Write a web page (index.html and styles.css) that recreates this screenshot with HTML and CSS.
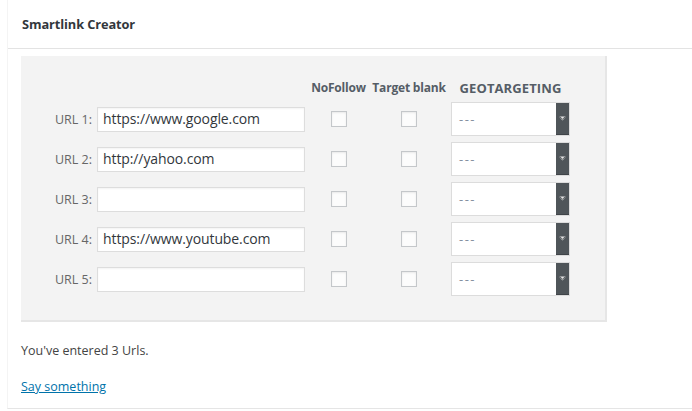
FILE: index.html
```html
<!DOCTYPE html>
<html>
<head>
<meta charset="utf-8">
<link rel="stylesheet" href="styles.css">
</head>
<body>
<div class="panel">
  <div class="panel-head"><h2 class="title">Smartlink Creator</h2></div>
  <div class="panel-body">
    <div class="box">
      <div class="grid">
        <div class="hcell"></div>
        <div class="hcell"></div>
        <div class="hcell">NoFollow</div>
        <div class="hcell">Target blank</div>
        <div class="hcell geo">GEOTARGETING</div>

        <label class="lbl">URL 1:</label>
        <div class="cell"><div class="input">https://www.google.com</div></div>
        <div class="cell center"><span class="check"></span></div>
        <div class="cell center"><span class="check"></span></div>
        <div class="cell center"><div class="select"><span class="sel-text">---</span><span class="sel-btn"><svg width="7" height="5" viewBox="0 0 7 5"><path d="M0 0.5 L3.5 4.5 L7 0.5 Z" fill="#e8e8e8"/><path d="M0.5 0.5 L3.5 3.2 L6.5 0.5" fill="none" stroke="#2f3336" stroke-width="0.8"/></svg></span></div></div>

        <label class="lbl">URL 2:</label>
        <div class="cell"><div class="input">http://yahoo.com</div></div>
        <div class="cell center"><span class="check"></span></div>
        <div class="cell center"><span class="check"></span></div>
        <div class="cell center"><div class="select"><span class="sel-text">---</span><span class="sel-btn"><svg width="7" height="5" viewBox="0 0 7 5"><path d="M0 0.5 L3.5 4.5 L7 0.5 Z" fill="#e8e8e8"/><path d="M0.5 0.5 L3.5 3.2 L6.5 0.5" fill="none" stroke="#2f3336" stroke-width="0.8"/></svg></span></div></div>

        <label class="lbl">URL 3:</label>
        <div class="cell"><div class="input"></div></div>
        <div class="cell center"><span class="check"></span></div>
        <div class="cell center"><span class="check"></span></div>
        <div class="cell center"><div class="select"><span class="sel-text">---</span><span class="sel-btn"><svg width="7" height="5" viewBox="0 0 7 5"><path d="M0 0.5 L3.5 4.5 L7 0.5 Z" fill="#e8e8e8"/><path d="M0.5 0.5 L3.5 3.2 L6.5 0.5" fill="none" stroke="#2f3336" stroke-width="0.8"/></svg></span></div></div>

        <label class="lbl">URL 4:</label>
        <div class="cell"><div class="input">https://www.youtube.com</div></div>
        <div class="cell center"><span class="check"></span></div>
        <div class="cell center"><span class="check"></span></div>
        <div class="cell center"><div class="select"><span class="sel-text">---</span><span class="sel-btn"><svg width="7" height="5" viewBox="0 0 7 5"><path d="M0 0.5 L3.5 4.5 L7 0.5 Z" fill="#e8e8e8"/><path d="M0.5 0.5 L3.5 3.2 L6.5 0.5" fill="none" stroke="#2f3336" stroke-width="0.8"/></svg></span></div></div>

        <label class="lbl">URL 5:</label>
        <div class="cell"><div class="input"></div></div>
        <div class="cell center"><span class="check"></span></div>
        <div class="cell center"><span class="check"></span></div>
        <div class="cell center"><div class="select"><span class="sel-text">---</span><span class="sel-btn"><svg width="7" height="5" viewBox="0 0 7 5"><path d="M0 0.5 L3.5 4.5 L7 0.5 Z" fill="#e8e8e8"/><path d="M0.5 0.5 L3.5 3.2 L6.5 0.5" fill="none" stroke="#2f3336" stroke-width="0.8"/></svg></span></div></div>
      </div>
    </div>
    <p class="count">You've entered 3 Urls.</p>
    <p class="say"><a href="#">Say something</a></p>
  </div>
</div>
</body>
</html>
```

FILE: styles.css
```css
html, body {
  margin: 0;
  padding: 0;
  background: #ffffff;
}
body {
  font-family: "Open Sans", "Noto Sans", sans-serif;
  color: #444;
  width: 692px;
  height: 411px;
  overflow: hidden;
}
.panel {
  margin-left: 7px;
  border-left: 1px solid #f4f4f4;
  border-bottom: 1px solid #e5e5e5;
  height: 409px;
  box-sizing: border-box;
}
.panel-head {
  height: 49px;
  border-bottom: 1px solid #e3e3e3;
  box-sizing: border-box;
  display: flex;
  align-items: center;
  padding: 0 0 1px 14px;
}
.title {
  margin: 0;
  font-size: 12.8px;
  font-weight: 700;
  color: #32373c;
  letter-spacing: -0.1px;
}
.panel-body {
  padding: 7px 0 0 13px;
}
.box {
  width: 584px;
  height: 264px;
  box-sizing: border-box;
  background: #f3f3f3;
  box-shadow: 1px 1px 0 1px #e6e6e6;
  padding-top: 21px;
}
.grid {
  display: grid;
  grid-template-columns: 74px 212px 63px 78px 125px;
  grid-template-rows: 22px repeat(5, 40px);
}
.hcell {
  font-size: 12px;
  font-weight: 700;
  color: #555d66;
  text-align: center;
  line-height: 22px;
  white-space: nowrap;
  letter-spacing: -0.2px;
}
.hcell.geo {
  font-size: 13px;
  letter-spacing: 0.1px;
}
.lbl {
  font-size: 12.5px;
  color: #666;
  text-align: right;
  padding-right: 3px;
  display: flex;
  align-items: center;
  justify-content: flex-end;
  padding-top: 1px;
}
.cell {
  display: flex;
  align-items: center;
}
.center {
  justify-content: center;
}
.input {
  margin-left: 2px;
  width: 208px;
  height: 25px;
  box-sizing: border-box;
  border: 1px solid #dddddd;
  background: #fff;
  box-shadow: inset 0 1px 2px rgba(0,0,0,0.05);
  font-size: 14px;
  color: #32373c;
  padding: 0 5px;
  line-height: 21px;
  letter-spacing: -0.1px;
  white-space: nowrap;
}
.check {
  width: 16px;
  height: 16px;
  box-sizing: border-box;
  border: 1px solid #c4c7ca;
  background: #fcfcfc;
  box-shadow: inset 0 1px 2px rgba(0,0,0,0.08);
}
.select {
  width: 119px;
  height: 34px;
  box-sizing: border-box;
  border: 1px solid #dcdcdc;
  background: #fff;
  display: flex;
  align-items: stretch;
}
.sel-text {
  flex: 1;
  display: flex;
  align-items: center;
  padding-left: 7px;
  font-size: 13px;
  color: #8590a0;
  letter-spacing: 1.5px;
}
.sel-btn {
  width: 13px;
  background: #4f5559;
  display: flex;
  align-items: center;
  justify-content: center;
  border-bottom: 1px solid #3f4448;
}
.count {
  margin: 22px 0 0 0;
  font-size: 12.5px;
  color: #444;
  line-height: 18px;
}
.say {
  margin: 18px 0 0 0;
  font-size: 12.5px;
  line-height: 18px;
}
.say a {
  color: #0073aa;
  text-decoration: underline;
}
```
